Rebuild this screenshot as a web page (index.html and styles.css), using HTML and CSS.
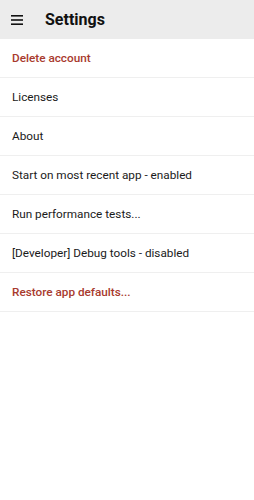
FILE: index.html
```html
<!DOCTYPE html>
<html>
<head>
<meta charset="utf-8">
<link rel="stylesheet" href="styles.css">
</head>
<body>
<header class="appbar">
  <svg class="menu-icon" width="12" height="10" viewBox="0 0 12 10"><rect x="0" y="0" width="12" height="1.6" fill="#111"/><rect x="0" y="4.2" width="12" height="1.6" fill="#111"/><rect x="0" y="8.4" width="12" height="1.6" fill="#111"/></svg>
  <h1 class="title">Settings</h1>
</header>
<ul class="list">
  <li class="item danger">Delete account</li>
  <li class="item">Licenses</li>
  <li class="item">About</li>
  <li class="item">Start on most recent app - enabled</li>
  <li class="item">Run performance tests...</li>
  <li class="item">[Developer] Debug tools - disabled</li>
  <li class="item danger">Restore app defaults...</li>
</ul>
</body>
</html>
```
FILE: styles.css
```css
html, body { margin: 0; padding: 0; background: #fff; }
body { font-family: Roboto, "Noto Sans", sans-serif; color: #1a1a1a; }
.appbar {
  height: 39px;
  background: #ececec;
  display: flex;
  align-items: center;
  padding-left: 11px;
  gap: 22px;
}
.menu-icon { display: block; }
.title { margin: 0; font-size: 16px; font-weight: 700; color: #111; }
.list { list-style: none; margin: 0; padding: 0; }
.item {
  box-sizing: border-box;
  height: 39px;
  display: flex;
  align-items: center;
  padding: 0 12px;
  font-size: 11.75px;
  border-bottom: 1px solid #efefef;
}
.danger { color: #a83a2e; font-weight: 500; }
```
